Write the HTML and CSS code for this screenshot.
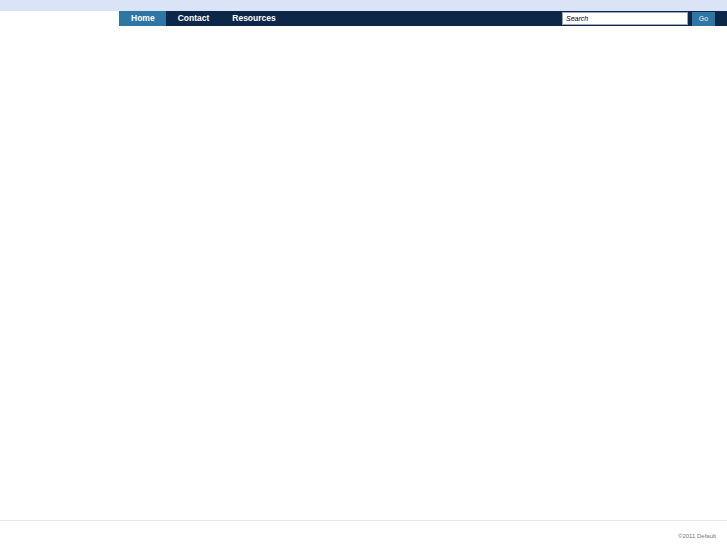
FILE: index.html
```
<!DOCTYPE html>
<html>
<head>
<meta charset="utf-8">
<link rel="stylesheet" href="styles.css">
</head>
<body>
<div class="topband"></div>
<div class="navwrap">
  <nav class="nav">
    <ul class="menu">
      <li class="item active">Home</li>
      <li class="item">Contact</li>
      <li class="item">Resources</li>
    </ul>
    <form class="search">
      <input class="search-input" type="text" value="Search">
      <button class="go" type="button">Go</button>
    </form>
  </nav>
</div>
<main class="content"></main>
<footer class="footer">
  <span class="copy">©2011 Default</span>
</footer>
</body>
</html>
```
FILE: styles.css
```
html, body {
  margin: 0;
  padding: 0;
  height: 100%;
  background: #ffffff;
  font-family: "Liberation Sans", Arial, sans-serif;
}
body {
  display: flex;
  flex-direction: column;
}
.topband {
  height: 11px;
  background: #dbe3f6;
}
.navwrap {
  padding-left: 119px;
}
.nav {
  height: 15px;
  background: #0c2748;
  display: flex;
  align-items: center;
  justify-content: space-between;
}
.menu {
  list-style: none;
  margin: 0;
  padding: 0;
  display: flex;
  height: 100%;
}
.item {
  color: #ffffff;
  font-weight: bold;
  font-size: 8.5px;
  line-height: 15px;
  padding: 0 11px 0 12px;
}
.active {
  background: #2e77a5;
}
.search {
  display: flex;
  align-items: center;
  height: 100%;
  margin: 0;
  padding-right: 12px;
  gap: 4px;
}
.search-input {
  box-sizing: border-box;
  width: 126px;
  height: 13px;
  margin: 0;
  padding: 0 3px;
  border: 1px solid #9aa7b8;
  font-family: "Liberation Sans", Arial, sans-serif;
  font-style: italic;
  font-size: 7px;
  color: #000;
  background: #fff;
}
.go {
  box-sizing: border-box;
  width: 23px;
  height: 14px;
  margin: 0;
  padding: 0;
  border: 0;
  background: #2e77a5;
  color: #bcd0e2;
  font-weight: bold;
  font-size: 7px;
  font-family: "Liberation Sans", Arial, sans-serif;
}
.content {
  flex: 1;
}
.footer {
  border-top: 1px solid #e8e8e8;
  height: 25px;
  display: flex;
  justify-content: flex-end;
  align-items: flex-end;
  box-sizing: border-box;
  padding: 0 11px 5px 0;
}
.copy {
  font-size: 6px;
  line-height: 7px;
  color: #777777;
}
```
